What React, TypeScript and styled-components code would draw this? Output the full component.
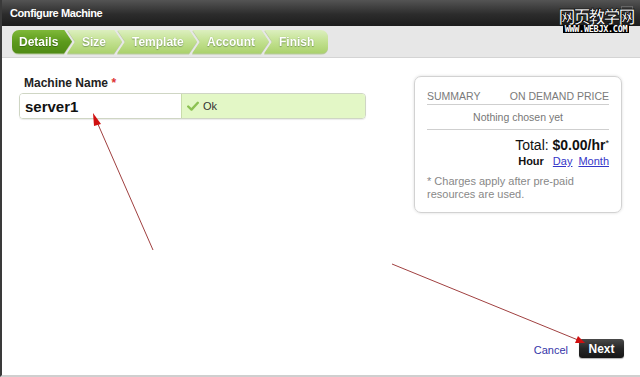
import React from "react";
import styled, { createGlobalStyle } from "styled-components";

const Global = createGlobalStyle`
  html, body { margin: 0; padding: 0; background: #fff; }
  body { font-family: "Liberation Sans", Arial, sans-serif; }
`;

const Frame = styled.div`
  position: relative;
  width: 640px;
  height: 377px;
  display: flex;
  flex-direction: column;
  box-sizing: border-box;
  border-left: 2px solid #3a3a3a;
  border-bottom: 2px solid #cfcfcf;
  overflow: hidden;
  background: #fff;
`;

const TitleBar = styled.div`
  height: 26px;
  flex: none;
  display: flex;
  align-items: center;
  justify-content: space-between;
  margin-left: -2px;
  padding: 0 7px 0 10px;
  background: linear-gradient(#545454, #2c2c2c 55%, #1c1c1c);
  color: #fff;
  font-size: 11px;
  letter-spacing: -0.4px;
  font-weight: bold;
`;

const Close = styled.div`
  width: 10px;
  height: 10px;
  border: 1px solid #666;
  color: #888;
  font-size: 11px;
  line-height: 10px;
  text-align: center;
  font-weight: normal;
  margin-top: -2px;
`;

const StepBar = styled.div`
  height: 31px;
  flex: none;
  display: flex;
  align-items: center;
  padding-left: 10px;
  background: #e7e7e7;
  border-bottom: 1px solid #d4d4d4;
`;

const Steps = styled.div`
  display: flex;
  height: 24px;
  filter: drop-shadow(0 1px 0 #b9c9a0);
`;

const Step = styled.div<{ $active?: boolean; $first?: boolean; $last?: boolean; $w: number }>`
  width: ${(p) => p.$w}px;
  height: 24px;
  margin-left: ${(p) => (p.$first ? 0 : -5)}px;
  box-sizing: border-box;
  display: flex;
  align-items: center;
  padding-left: ${(p) => (p.$first ? 7 : 15)}px;
  font-size: 12px;
  font-weight: bold;
  color: #fff;
  text-shadow: ${(p) => (p.$active ? "0 1px 0 #3d6b10" : "0 1px 1px #7f9e5a, 0 0 1px #8fae6c")};
  background: ${(p) =>
    p.$active
      ? "linear-gradient(#7fb93a, #5c9a1c 50%, #4f8a14)"
      : "linear-gradient(#dcefbf, #c4e293 45%, #a9d06a)"};
  border-radius: ${(p) => (p.$first ? "7px 0 0 7px" : p.$last ? "0 7px 7px 0" : "0")};
  clip-path: ${(p) =>
    p.$last
      ? "polygon(0 0, 100% 0, 100% 100%, 0 100%, 8px 50%)"
      : p.$first
      ? "polygon(0 0, calc(100% - 8px) 0, 100% 50%, calc(100% - 8px) 100%, 0 100%)"
      : "polygon(0 0, calc(100% - 8px) 0, 100% 50%, calc(100% - 8px) 100%, 0 100%, 8px 50%)"};
`;

const Body = styled.div`
  flex: 1;
  display: flex;
  justify-content: space-between;
  padding: 17px 18px 0 17px;
`;

const FormCol = styled.div`
  display: flex;
  flex-direction: column;
`;

const Label = styled.div`
  font-size: 12px;
  font-weight: bold;
  color: #222;
  padding-left: 5px;
  margin-bottom: 3px;
  margin-top: 1px;
  span { color: #d33; }
`;

const Field = styled.div`
  display: flex;
  width: 347px;
  height: 26px;
  box-sizing: border-box;
  border: 1px solid #cfd6c4;
  border-radius: 4px;
  overflow: hidden;
  box-shadow: 0 1px 1px rgba(0,0,0,0.08);
`;

const Input = styled.div`
  flex: none;
  width: 162px;
  box-sizing: border-box;
  display: flex;
  align-items: center;
  padding-left: 5px;
  font-size: 15px;
  font-weight: bold;
  color: #111;
  border-right: 1px solid #c9dcaa;
  background: #fff;
`;

const Valid = styled.div`
  flex: 1;
  display: flex;
  align-items: center;
  gap: 4px;
  padding-left: 5px;
  background: #e3f7c6;
  font-size: 11px;
  color: #333;
`;

const Summary = styled.div`
  width: 208px;
  height: 137px;
  box-sizing: border-box;
  border: 1px solid #d2d2d2;
  border-radius: 7px;
  box-shadow: 0 0 3px rgba(0,0,0,0.15);
  padding: 13px 12px 0 12px;
  margin-top: 1px;
  display: flex;
  flex-direction: column;
  color: #777;
  font-size: 11px;
`;

const SumHead = styled.div`
  display: flex;
  justify-content: space-between;
  padding-bottom: 2px;
  border-bottom: 1px solid #cfcfcf;
  font-size: 10.5px;
  color: #7a7a7a;
`;

const Nothing = styled.div`
  text-align: center;
  font-size: 10.5px;
  padding: 6px 0 6px;
  border-bottom: 1px solid #cfcfcf;
  color: #777;
`;

const Total = styled.div`
  text-align: right;
  font-size: 14px;
  color: #111;
  margin-top: 7px;
  b { font-weight: bold; }
  sup { font-size: 9px; vertical-align: 4px; }
`;

const Periods = styled.div`
  display: flex;
  justify-content: flex-end;
  gap: 6px;
  margin-top: 2px;
  font-size: 11px;
  color: #111;
  b { font-weight: bold; margin-right: 3px; }
  a { color: #3535c8; text-decoration: underline; }
`;

const Note = styled.div`
  margin-top: 8px;
  line-height: 13px;
  color: #888;
`;

const Footer = styled.div`
  height: 36px;
  flex: none;
  display: flex;
  justify-content: flex-end;
  align-items: flex-start;
  gap: 11px;
  padding-right: 16px;
`;

const Cancel = styled.a`
  font-size: 11px;
  color: #3535a8;
  margin-top: 5px;
`;

const NextBtn = styled.div`
  width: 45px;
  height: 19px;
  display: flex;
  align-items: center;
  justify-content: center;
  border-radius: 3px;
  background: linear-gradient(#4a4a4a, #262626 50%, #161616);
  color: #fff;
  font-size: 12px;
  font-weight: bold;
  box-shadow: 0 1px 1px rgba(0,0,0,0.3);
`;

const Overlay = styled.svg`
  position: absolute;
  left: 0;
  top: 0;
  pointer-events: none;
`;

const Watermark = styled.div`
  position: absolute;
  left: 556px;
  top: 6px;
  width: 76px;
  display: flex;
  flex-direction: column;
  align-items: center;
`;

const WmCn = styled.div`
  font-family: "Noto Sans CJK SC", sans-serif;
  font-size: 17px;
  line-height: 19px;
  color: #fff;
  -webkit-text-stroke: 0.7px #000;
  font-weight: bold;
  letter-spacing: -2px;
`;

const WmUrl = styled.div`
  font-family: "DejaVu Sans Mono", monospace;
  font-size: 8.5px;
  line-height: 8px;
  font-weight: bold;
  color: #fff;
  background: #000;
  padding: 0 2px;
  letter-spacing: -0.3px;
`;

const Check = () => (
  <svg width="12" height="10" viewBox="0 0 12 10">
    <path d="M1.2 5.5 L4.5 8.6 L10.8 1.8" fill="none" stroke="#8cc152" strokeWidth="2.4" strokeLinecap="round" strokeLinejoin="round" />
  </svg>
);

export default function App() {
  return (
    <>
      <Global />
      <Frame>
        <TitleBar>
          Configure Machine
          <Close>×</Close>
        </TitleBar>
        <StepBar>
          <Steps>
            <Step $active $first $w={60}>Details</Step>
            <Step $w={55}>Size</Step>
            <Step $w={80}>Template</Step>
            <Step $w={77}>Account</Step>
            <Step $last $w={64}>Finish</Step>
          </Steps>
        </StepBar>
        <Body>
          <FormCol>
            <Label>
              Machine Name <span>*</span>
            </Label>
            <Field>
              <Input>server1</Input>
              <Valid>
                <Check />
                Ok
              </Valid>
            </Field>
          </FormCol>
          <Summary>
            <SumHead>
              <span>SUMMARY</span>
              <span>ON DEMAND PRICE</span>
            </SumHead>
            <Nothing>Nothing chosen yet</Nothing>
            <Total>
              Total: <b>$0.00/hr</b>
              <sup>*</sup>
            </Total>
            <Periods>
              <b>Hour</b>
              <a>Day</a>
              <a>Month</a>
            </Periods>
            <Note>
              * Charges apply after pre-paid
              <br />
              resources are used.
            </Note>
          </Summary>
        </Body>
        <Footer>
          <Cancel>Cancel</Cancel>
          <NextBtn>Next</NextBtn>
        </Footer>
        <Overlay width="640" height="377" viewBox="0 0 640 377">
          <line x1="151" y1="250" x2="95" y2="122" stroke="#a04040" strokeWidth="1" />
          <polygon points="91,113 99,124 92,126" fill="#d01010" />
          <line x1="390" y1="264" x2="576" y2="340" stroke="#a04040" strokeWidth="1" />
          <polygon points="583,343 573,343 576,336" fill="#d01010" />
        </Overlay>
        <Watermark>
          <WmCn>网页教学网</WmCn>
          <WmUrl>WWW.WEBJX.COM</WmUrl>
        </Watermark>
      </Frame>
    </>
  );
}
